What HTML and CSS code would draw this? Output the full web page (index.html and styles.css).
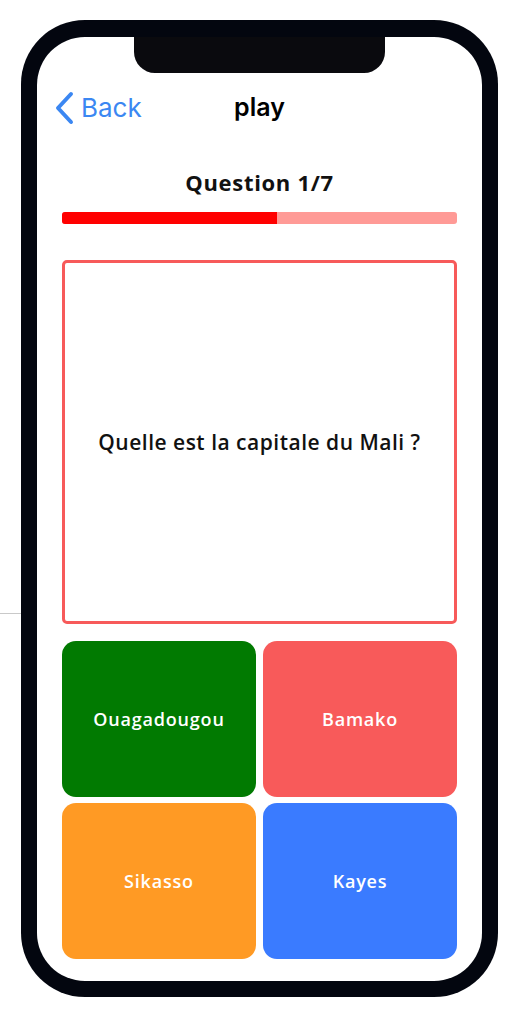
FILE: index.html
```html
<!DOCTYPE html>
<html lang="fr">
<head>
<meta charset="utf-8">
<title>play</title>
<link rel="stylesheet" href="styles.css">
</head>
<body>
<div class="stage">
  <div class="phone">
    <div class="screen">
      <div class="notch"></div>
      <div class="nav">
        <a class="back">
          <svg class="chev" width="20" height="34" viewBox="0 0 20 34"><path d="M17 3 L4 17 L17 31" fill="none" stroke="currentColor" stroke-width="4" stroke-linecap="round" stroke-linejoin="round"/></svg>
          <span>Back</span>
        </a>
        <div class="nav-title">play</div>
        <div></div>
      </div>
      <div class="content">
        <div class="q-count">Question 1/7</div>
        <div class="progress"><div class="progress-fill" style="width:54.4%"></div></div>
        <div class="question-box">
          <p class="question">Quelle est la capitale du Mali ?</p>
        </div>
        <div class="answers">
          <button class="answer green">Ouagadougou</button>
          <button class="answer red">Bamako</button>
          <button class="answer orange">Sikasso</button>
          <button class="answer blue">Kayes</button>
        </div>
      </div>
    </div>
  </div>
</div>
</body>
</html>
```
FILE: styles.css
```css
* { box-sizing: border-box; }
html, body { margin: 0; padding: 0; background: #ffffff; }
body { font-family: "Open Sans", "Noto Sans", sans-serif; }

.stage {
  position: relative;
  width: 514px;
  height: 1024px;
  padding: 20px 0 0 21px;
}
.stage::before {
  content: "";
  position: absolute;
  left: 0;
  top: 613px;
  width: 21px;
  height: 1px;
  background: #c9c9c9;
}

.phone {
  width: 477px;
  height: 977px;
  background: #03060f;
  border-radius: 64px;
  padding: 17px 16px 16px 16px;
}

.screen {
  position: relative;
  height: 944px;
  background: #ffffff;
  border-radius: 48px;
  padding-top: 53px;
  overflow: hidden;
}

.notch {
  position: absolute;
  left: 97px;
  top: 0;
  width: 251px;
  height: 36px;
  background: #0a0a0e;
  border-radius: 0 0 21px 21px;
}

.nav {
  height: 36px;
  display: grid;
  grid-template-columns: 1fr auto 1fr;
  align-items: center;
  padding: 0 17px;
}
.back {
  display: flex;
  align-items: center;
  gap: 7px;
  color: #3b87f2;
  font-family: "Inter", "Liberation Sans", sans-serif;
  font-size: 26px;
  font-weight: 400;
  line-height: 36px;
}
.chev { display: block; }
.nav-title {
  font-family: "Inter", "Liberation Sans", sans-serif;
  font-size: 25px;
  font-weight: 600;
  color: #000;
  line-height: 36px;
  margin-top: -2px;
}

.content {
  padding: 0 25px;
}

.q-count {
  margin-top: 41px;
  height: 30px;
  line-height: 30px;
  text-align: center;
  font-size: 22px;
  font-weight: 700;
  letter-spacing: 0.7px;
  color: #111;
}

.progress {
  margin-top: 15px;
  height: 12px;
  border-radius: 3px;
  background: #ff9a96;
  overflow: hidden;
}
.progress-fill {
  height: 100%;
  background: #ff0000;
}

.question-box {
  margin-top: 36px;
  height: 364px;
  border: 3px solid #f75a5a;
  border-radius: 5px;
  display: flex;
  align-items: center;
  justify-content: center;
}
.question {
  margin: 0;
  font-size: 21px;
  font-weight: 600;
  letter-spacing: 0.5px;
  color: #111;
}

.answers {
  margin-top: 17px;
  display: grid;
  grid-template-columns: 1fr 1fr;
  grid-template-rows: 156px 156px;
  column-gap: 7px;
  row-gap: 6px;
}
.answer {
  border: 0;
  border-radius: 14px;
  color: #fff;
  font-family: "Open Sans", "Noto Sans", sans-serif;
  font-size: 18px;
  font-weight: 600;
  letter-spacing: 0.8px;
  padding: 0;
}
.green { background: #017a01; }
.red { background: #f85a5a; }
.orange { background: #ff9a24; }
.blue { background: #3a7bff; }
```
